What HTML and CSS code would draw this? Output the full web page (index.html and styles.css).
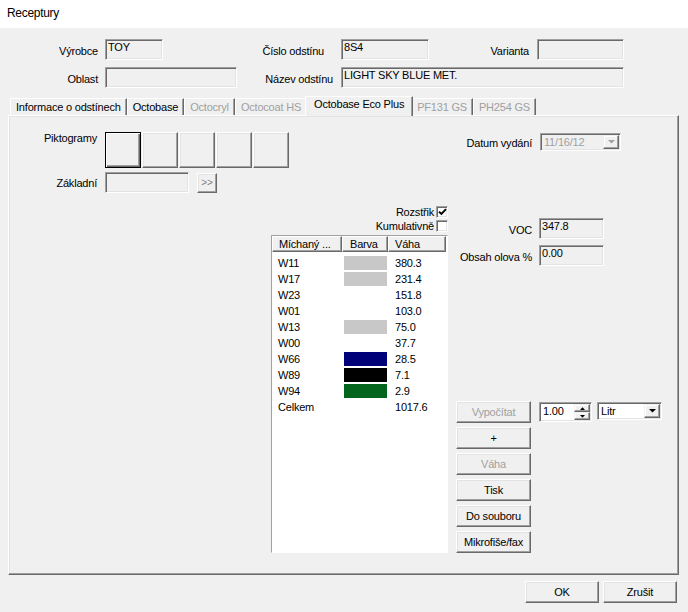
FILE: index.html
```html
<!DOCTYPE html>
<html lang="cs">
<head>
<meta charset="utf-8">
<title>Receptury</title>
<link rel="stylesheet" href="styles.css">
</head>
<body>
<div class="titlebar">Receptury</div>

<div class="fields">
  <div class="row">
    <span class="lbl w98">Výrobce</span>
    <span class="edit ml7 w58">TOY</span>
    <span class="lbl w161">Číslo odstínu</span>
    <span class="edit ml17 w88">8S4</span>
    <span class="lbl w100">Varianta</span>
    <span class="edit ml8 w87"></span>
  </div>
  <div class="row">
    <span class="lbl w98">Oblast</span>
    <span class="edit ml7 w132"></span>
    <span class="lbl w96">Název odstínu</span>
    <span class="edit ml8 w283">LIGHT SKY BLUE MET.</span>
  </div>
</div>

<div class="tabs">
  <div class="tab">Informace o odstínech</div>
  <div class="tab">Octobase</div>
  <div class="tab disabled">Octocryl</div>
  <div class="tab disabled">Octocoat HS</div>
  <div class="tab active">Octobase Eco Plus</div>
  <div class="tab disabled">PF131 GS</div>
  <div class="tab disabled">PH254 GS</div>
</div>

<div class="panel">
  <div class="col-left">
    <div class="pikto-row">
      <span class="lbl plabel">Piktogramy</span>
      <div class="pikto">
        <span class="pbox focus"></span>
        <span class="pbox"></span>
        <span class="pbox"></span>
        <span class="pbox"></span>
        <span class="pbox"></span>
      </div>
    </div>
    <div class="zakl-row">
      <span class="lbl plabel">Základní</span>
      <span class="edit zakl"></span>
      <button class="btn more">&gt;&gt;</button>
    </div>
    <div class="checks">
      <div class="chk-row">Rozstřik<span class="chk"><svg width="9" height="8" viewBox="0 0 9 8"><path d="M1 3.6 L3.4 6 L8 1.2" fill="none" stroke="#000" stroke-width="1.9"/></svg></span></div>
      <div class="chk-row">Kumulativně<span class="chk"></span></div>
    </div>
    <div class="listbox">
      <div class="lv-head">
        <span class="hc h1">Míchaný ...</span>
        <span class="hc h2">Barva</span>
        <span class="hc h3">Váha</span>
      </div>
      <div class="lv-body">
        <div class="lv-row"><span class="n">W11</span><span class="swc"><span class="sw" style="background:#c8c8c8"></span></span><span>380.3</span></div>
        <div class="lv-row"><span class="n">W17</span><span class="swc"><span class="sw" style="background:#c8c8c8"></span></span><span>231.4</span></div>
        <div class="lv-row"><span class="n">W23</span><span class="swc"></span><span>151.8</span></div>
        <div class="lv-row"><span class="n">W01</span><span class="swc"></span><span>103.0</span></div>
        <div class="lv-row"><span class="n">W13</span><span class="swc"><span class="sw" style="background:#c8c8c8"></span></span><span>75.0</span></div>
        <div class="lv-row"><span class="n">W00</span><span class="swc"></span><span>37.7</span></div>
        <div class="lv-row"><span class="n">W66</span><span class="swc"><span class="sw" style="background:#000078"></span></span><span>28.5</span></div>
        <div class="lv-row"><span class="n">W89</span><span class="swc"><span class="sw" style="background:#000000"></span></span><span>7.1</span></div>
        <div class="lv-row"><span class="n">W94</span><span class="swc"><span class="sw" style="background:#03641c"></span></span><span>2.9</span></div>
        <div class="lv-row"><span class="n">Celkem</span><span class="swc"></span><span>1017.6</span></div>
      </div>
    </div>
  </div>

  <div class="col-right">
    <div class="rrow datum">
      <span class="lbl rlabel">Datum vydání</span>
      <div class="combo disabled dcombo">
        <span class="ctext">11/16/12</span>
        <span class="dd"><svg width="7" height="4" viewBox="0 0 7 4"><path d="M0 0H7L3.5 3.6Z" fill="#a0a0a0"/></svg></span>
      </div>
    </div>
    <div class="rrow voc">
      <span class="lbl rlabel">VOC</span>
      <span class="edit num">347.8</span>
    </div>
    <div class="rrow olovo">
      <span class="lbl rlabel">Obsah olova %</span>
      <span class="edit num">0.00</span>
    </div>
    <div class="actions">
      <div class="btncol">
        <button class="btn disabled">Vypočítat</button>
        <button class="btn">+</button>
        <button class="btn disabled">Váha</button>
        <button class="btn">Tisk</button>
        <button class="btn">Do souboru</button>
        <button class="btn">Mikrofiše/fax</button>
      </div>
      <div class="spin">
        <span class="val">1.00</span>
        <span class="sbtns">
          <span class="sb"><svg width="5" height="3" viewBox="0 0 5 3"><path d="M0 3H5L2.5 0.3Z" fill="#000"/></svg></span>
          <span class="sb"><svg width="5" height="3" viewBox="0 0 5 3"><path d="M0 0H5L2.5 2.7Z" fill="#000"/></svg></span>
        </span>
      </div>
      <div class="combo white lcombo">
        <span class="ctext">Litr</span>
        <span class="dd"><svg width="7" height="4" viewBox="0 0 7 4"><path d="M0 0H7L3.5 3.6Z" fill="#000"/></svg></span>
      </div>
    </div>
  </div>
</div>

<div class="footer">
  <button class="btn fbtn">OK</button>
  <button class="btn fbtn">Zrušit</button>
</div>
</body>
</html>
```

FILE: styles.css
```css
* { box-sizing: border-box; }
html, body { margin: 0; padding: 0; }
body {
  width: 688px;
  height: 612px;
  overflow: hidden;
  background: #f0f0f0;
  font-family: "Liberation Sans", Arial, sans-serif;
  font-size: 11px;
  letter-spacing: -0.2px;
  color: #000;
}

.titlebar {
  height: 28px;
  background: #fff;
  padding-left: 7px;
  font-size: 12px;
  line-height: 26px;
  letter-spacing: -0.3px;
}

/* header fields */
.fields { padding-top: 11px; }
.row { display: flex; align-items: center; height: 21px; }
.row + .row { margin-top: 7px; }
.lbl { text-align: right; white-space: nowrap; line-height: 14px; padding-top: 2px; }
.w98 { width: 98px; }
.w161 { width: 161px; }
.w100 { width: 100px; }
.w96 { width: 96px; }
.ml7 { margin-left: 7px; }
.ml8 { margin-left: 8px; }
.ml17 { margin-left: 17px; }
.w58 { width: 58px; }
.w88 { width: 88px; }
.w87 { width: 87px; }
.w132 { width: 132px; }
.w283 { width: 283px; }

.edit {
  display: block;
  height: 21px;
  border: 1px solid;
  border-color: #a0a0a0 #fff #fff #a0a0a0;
  box-shadow: inset 1px 1px #696969, inset -1px -1px #e3e3e3;
  padding: 1px 2px 0 2px;
  line-height: 13px;
  white-space: nowrap;
  overflow: hidden;
}

/* tabs */
.tabs {
  display: flex;
  align-items: flex-end;
  height: 19px;
  margin-top: 8px;
  padding-left: 10px;
}
.tab {
  height: 17px;
  padding: 0 5px;
  border: 1px solid;
  border-bottom: 0;
  border-color: #fff #696969 transparent #fff;
  box-shadow: inset -1px 0 #a0a0a0;
  line-height: 16px;
  white-space: nowrap;
}
.tab.disabled { color: #a0a0a0; }
.tab.active {
  height: 20px;
  margin: 0 -2px -1px;
  padding: 0 8px 0 8px;
  position: relative;
  z-index: 1;
  background: #f0f0f0;
  line-height: 15px;
}

/* panel */
.panel {
  margin-left: 8px;
  width: 671px;
  height: 460px;
  display: flex;
  border: 1px solid;
  border-color: #fff #696969 #696969 #fff;
  box-shadow: inset -1px -1px #a0a0a0, inset 1px 1px #e3e3e3;
}

.col-left {
  width: 439px;
  padding-top: 16px;
  display: flex;
  flex-direction: column;
}
.pikto-row { display: flex; align-items: flex-start; }
.plabel { width: 88px; padding-top: 0; line-height: 13px; }
.pikto { display: flex; gap: 1px; margin-left: 8px; }
.pbox {
  width: 36px;
  height: 36px;
  border: 1px solid;
  border-color: #fff #696969 #696969 #fff;
  box-shadow: inset -1px -1px #a0a0a0, inset 1px 1px #e3e3e3;
}
.pbox.focus {
  border-color: #000;
  box-shadow: inset 1px 1px #fff, inset -1px -1px #696969, inset -2px -2px #a0a0a0;
}

.zakl-row { display: flex; align-items: center; height: 21px; margin-top: 4px; }
.zakl-row .plabel { padding-top: 2px; }
.zakl { margin-left: 8px; width: 84px; }

.btn {
  font: inherit;
  letter-spacing: inherit;
  color: #000;
  padding: 0;
  margin: 0;
  height: 22px;
  background: #f0f0f0;
  border: 1px solid;
  border-color: #fff #696969 #696969 #fff;
  box-shadow: inset -1px -1px #a0a0a0, inset 1px 1px #e3e3e3;
  white-space: nowrap;
}
.btn.disabled { color: #a0a0a0; }
.more { margin-left: 8px; width: 20px; height: 20px; color: #808080; font-size: 10px; line-height: 16px; }

.checks { margin-top: 12px; display: flex; flex-direction: column; align-items: flex-end; }
.chk-row { display: flex; align-items: center; height: 14px; white-space: nowrap; }
.chk {
  width: 12px;
  height: 12px;
  margin-left: 2px;
  background: #fff;
  border: 1px solid;
  border-color: #a0a0a0 #fff #fff #a0a0a0;
  box-shadow: inset 1px 1px #696969, inset -1px -1px #e3e3e3;
  display: flex;
  align-items: center;
  justify-content: center;
}
.chk svg { display: block; }

.listbox {
  margin-top: 2px;
  align-self: flex-end;
  width: 177px;
  height: 318px;
  background: #fff;
  border: 1px solid;
  border-color: #a0a0a0 #fff #fff #a0a0a0;
}
.lv-head { display: flex; height: 16px; }
.hc {
  height: 16px;
  line-height: 14px;
  padding-left: 6px;
  border: 1px solid;
  border-color: #fff #696969 #696969 #fff;
  box-shadow: inset -1px -1px #a0a0a0;
  background: #f0f0f0;
  white-space: nowrap;
  overflow: hidden;
}
.h1 { width: 70px; }
.h2 { width: 46px; padding-left: 7px; }
.h3 { width: 58px; padding-left: 6px; }

.lv-body { padding-top: 3px; }
.lv-row {
  display: grid;
  grid-template-columns: 72px 51px 1fr;
  height: 16px;
  line-height: 16px;
  align-items: center;
}
.lv-row .n { padding-left: 6px; }
.swc { display: flex; align-items: center; height: 16px; }
.sw { display: block; width: 43px; height: 14px; }

/* right column */
.col-right {
  flex: 1;
  padding-top: 17px;
  display: flex;
  flex-direction: column;
}
.rrow { display: flex; align-items: center; }
.rlabel { width: 84px; }
.datum { height: 18px; }
.voc { height: 21px; margin-top: 67px; }
.olovo { height: 21px; margin-top: 6px; }
.num { margin-left: 7px; width: 65px; }

.combo {
  display: flex;
  height: 18px;
  padding: 1px;
  border: 1px solid;
  border-color: #a0a0a0 #fff #fff #a0a0a0;
  box-shadow: inset 1px 1px #696969, inset -1px -1px #e3e3e3;
}
.combo.white { background: #fff; }
.combo.disabled { color: #a0a0a0; }
.ctext { flex: 1; padding-left: 2px; line-height: 14px; white-space: nowrap; }
.dd {
  width: 16px;
  height: 14px;
  display: flex;
  align-items: center;
  justify-content: center;
  background: #f0f0f0;
  border: 1px solid;
  border-color: #f0f0f0 #696969 #696969 #f0f0f0;
  box-shadow: inset -1px -1px #a0a0a0, inset 1px 1px #fff;
}
.dd svg { display: block; }
.dcombo { margin-left: 8px; width: 81px; }

.actions { display: flex; align-items: flex-start; margin-top: 135px; }
.btncol { margin-left: 8px; width: 75px; display: flex; flex-direction: column; gap: 4px; }
.btncol .btn { width: 75px; }

.spin {
  margin-left: 8px;
  margin-top: 1px;
  width: 53px;
  height: 20px;
  display: flex;
  padding: 1px;
  background: #fff;
  border: 1px solid;
  border-color: #a0a0a0 #fff #fff #a0a0a0;
  box-shadow: inset 1px 1px #696969, inset -1px -1px #e3e3e3;
}
.spin .val { flex: 1; padding-left: 2px; line-height: 15px; }
.sbtns { width: 16px; display: flex; flex-direction: column; }
.sb {
  flex: 1;
  display: flex;
  align-items: center;
  justify-content: center;
  background: #f0f0f0;
  border: 1px solid;
  border-color: #f0f0f0 #696969 #696969 #f0f0f0;
  box-shadow: inset -1px -1px #a0a0a0, inset 1px 1px #fff;
}
.sb svg { display: block; }
.lcombo { margin-left: 5px; margin-top: 1px; width: 65px; }

/* footer */
.footer {
  display: flex;
  justify-content: flex-end;
  gap: 4px;
  margin-top: 6px;
  padding-right: 11px;
}
.fbtn { width: 74px; height: 22px; }
```
